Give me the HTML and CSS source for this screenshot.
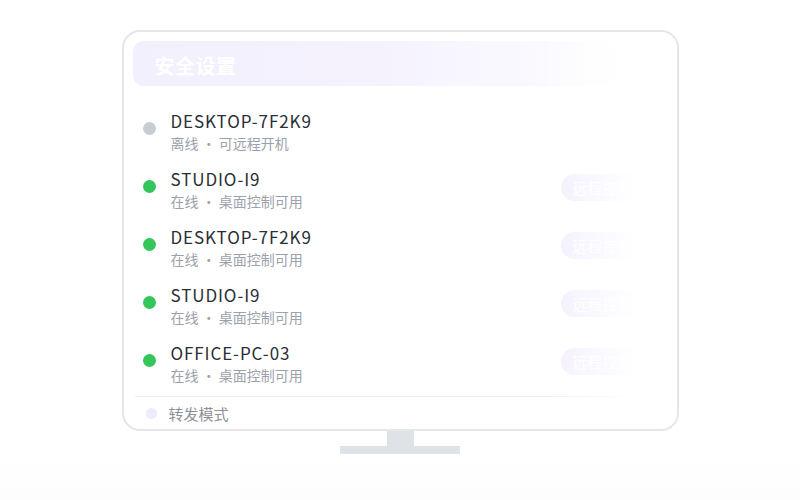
FILE: index.html
```html
<!DOCTYPE html>
<html lang="zh">
<head>
<meta charset="utf-8">
<link rel="stylesheet" href="styles.css">
</head>
<body>
<div class="scene">
  <div class="monitor">
    <div class="header">安全设置</div>
    <div class="list">
      <div class="row">
        <span class="dot off"></span>
        <div class="info">
          <div class="name">DESKTOP-7F2K9</div>
          <div class="sub">离线 · 可远程开机</div>
        </div>
      </div>
      <div class="row">
        <span class="dot on"></span>
        <div class="info">
          <div class="name">STUDIO-I9</div>
          <div class="sub">在线 · 桌面控制可用</div>
        </div>
        <span class="btn">远程控制</span>
      </div>
      <div class="row">
        <span class="dot on"></span>
        <div class="info">
          <div class="name">DESKTOP-7F2K9</div>
          <div class="sub">在线 · 桌面控制可用</div>
        </div>
        <span class="btn">远程控制</span>
      </div>
      <div class="row">
        <span class="dot on"></span>
        <div class="info">
          <div class="name">STUDIO-I9</div>
          <div class="sub">在线 · 桌面控制可用</div>
        </div>
        <span class="btn">远程控制</span>
      </div>
      <div class="row">
        <span class="dot on"></span>
        <div class="info">
          <div class="name">OFFICE-PC-03</div>
          <div class="sub">在线 · 桌面控制可用</div>
        </div>
        <span class="btn">远程控制</span>
      </div>
    </div>
    <div class="footer">
      <span class="fdot"></span>
      <span class="ftext">转发模式</span>
    </div>
    <div class="fade"></div>
  </div>
  <div class="neck"></div>
  <div class="base"></div>
</div>
</body>
</html>
```
FILE: styles.css
```css
* { box-sizing: border-box; }
html, body {
  margin: 0;
  padding: 0;
  width: 800px;
  height: 500px;
  overflow: hidden;
  background: linear-gradient(#ffffff 0%, #ffffff 90%, #fdfdfd 100%);
  font-family: "Noto Sans CJK SC", "Noto Sans", sans-serif;
}
.scene {
  padding-top: 30px;
  display: flex;
  flex-direction: column;
  align-items: center;
}
.monitor {
  position: relative;
  width: 557px;
  height: 401px;
  border: 2px solid #e4e6ea;
  border-radius: 18px;
  background: #ffffff;
  padding: 9px 9px 0 9px;
  display: flex;
  flex-direction: column;
  overflow: hidden;
}
.header {
  height: 45px;
  border-radius: 10px;
  background: linear-gradient(90deg, #f3f0fe 0%, #f5f2fe 45%, #fbfaff 80%, #ffffff 100%);
  color: #ffffff;
  font-weight: 700;
  font-size: 20px;
  line-height: 49px;
  padding-left: 22px;
  letter-spacing: 0.5px;
}
.list {
  margin: 16px 2px 0 2px;
  border-bottom: 1px solid #eeeff2;
  padding-bottom: 4px;
}
.row {
  display: flex;
  align-items: center;
  padding: 8px 0 8px 8px;
  height: 58px;
}
.dot {
  width: 13px;
  height: 13px;
  border-radius: 50%;
  align-self: flex-start;
  margin-top: 12px;
  flex: none;
}
.dot.off { background: #c9cdd3; }
.dot.on { background: #34c65a; }
.info {
  margin-left: 15px;
  flex: 1;
}
.name {
  font-size: 17px;
  line-height: 24px;
  color: #2a2e35;
  letter-spacing: 0.9px;
}
.sub {
  font-size: 14px;
  line-height: 20px;
  color: #9ca2ab;
}
.btn {
  width: 84px;
  height: 27px;
  border-radius: 14px;
  background: #f1edfe;
  color: #ffffff;
  font-size: 15px;
  line-height: 27px;
  padding-left: 12px;
  margin-right: 21px;
  margin-top: -4px;
  white-space: nowrap;
  overflow: hidden;
}
.footer {
  display: flex;
  align-items: center;
  height: 32px;
  padding-left: 13px;
}
.fdot {
  width: 11px;
  height: 11px;
  border-radius: 50%;
  background: #efebfe;
}
.ftext {
  margin-left: 12px;
  font-size: 15px;
  color: #8c9199;
}
.fade {
  position: absolute;
  top: 0;
  right: 0;
  bottom: 0;
  width: 140px;
  background: linear-gradient(90deg, rgba(255,255,255,0) 0%, rgba(255,255,255,0.6) 40%, #ffffff 70%);
  pointer-events: none;
}
.neck {
  width: 27px;
  height: 15px;
  background: #dfe2e6;
}
.base {
  width: 120px;
  height: 8px;
  background: #dfe2e6;
}
```
